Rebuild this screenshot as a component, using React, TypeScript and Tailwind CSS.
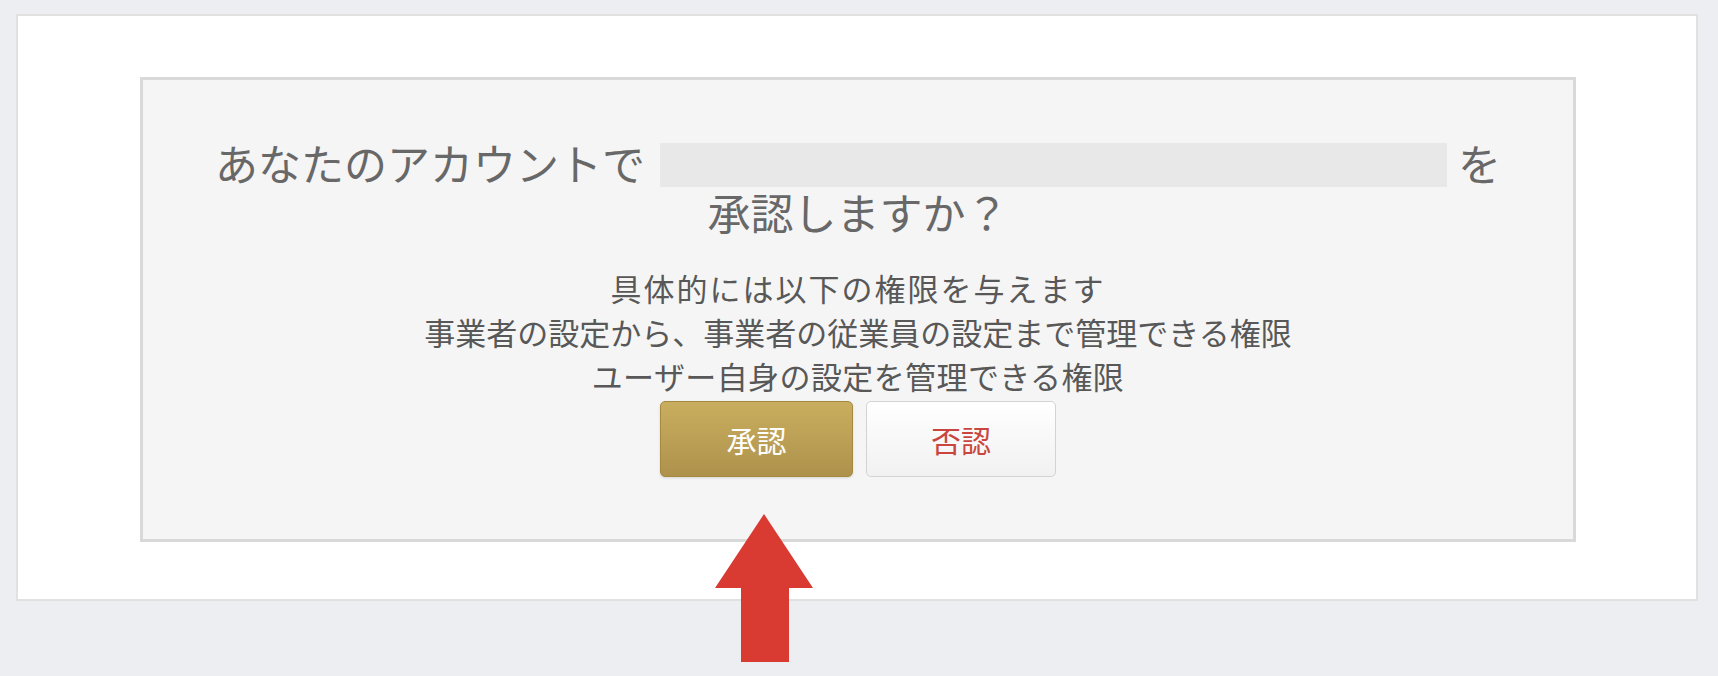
import React from "react"

const jp = { fontFamily: '"Noto Sans CJK JP", "Noto Sans", sans-serif' }

const permissions = [
  { text: "具体的には以下の権限を与えます", tracking: "tracking-[2px]" },
  { text: "事業者の設定から、事業者の従業員の設定まで管理できる権限", tracking: "" },
  { text: "ユーザー自身の設定を管理できる権限", tracking: "tracking-[0.4px]" },
]

export default function App() {
  return (
    <div className="relative w-full h-[676px] overflow-hidden bg-[#eceef2] pt-[14px] pl-[16px] pr-[20px]" style={jp}>
      <div className="h-[587px] border-2 border-[#e1e1e1] bg-white pt-[61px]">
        <div className="ml-[122px] mr-[120px] h-[465px] border-[3px] border-[#d9d9d9] bg-[#f5f5f5] pt-[57px] flex flex-col items-center">
          <div className="text-[43px] leading-[49px] text-[#686868] text-center">
            <div className="flex items-center justify-center">
              <span>あなたのアカウントで</span>
              <span className="inline-block w-[787px] h-[44px] bg-[#e8e8e8] ml-[15px] mr-[11px] mt-[6px]" />
              <span>を</span>
            </div>
            <div>承認しますか？</div>
          </div>

          <div className="mt-[30px] text-[31px] leading-[44px] text-[#585858] text-center">
            {permissions.map((p) => (
              <div key={p.text} className={p.tracking}>
                {p.text}
              </div>
            ))}
          </div>

          <div className="mt-[3px] flex gap-[13px]">
            <button className="w-[193px] h-[76px] rounded-[5px] border border-[#a5893f] bg-gradient-to-b from-[#c9ae5f] to-[#ae924c] text-white text-[30px] shadow-sm">
              承認
            </button>
            <button className="w-[190px] h-[76px] rounded-[5px] border border-[#d3d3d3] bg-gradient-to-b from-white to-[#f1f1f1] text-[#c9463f] text-[30px]">
              否認
            </button>
          </div>
        </div>
      </div>

      <svg className="absolute left-[715px] top-[514px]" width="98" height="148" viewBox="0 0 98 148">
        <polygon points="49,0 98,74 74,74 74,148 26,148 26,74 0,74" fill="#d93a32" />
      </svg>
    </div>
  )
}
